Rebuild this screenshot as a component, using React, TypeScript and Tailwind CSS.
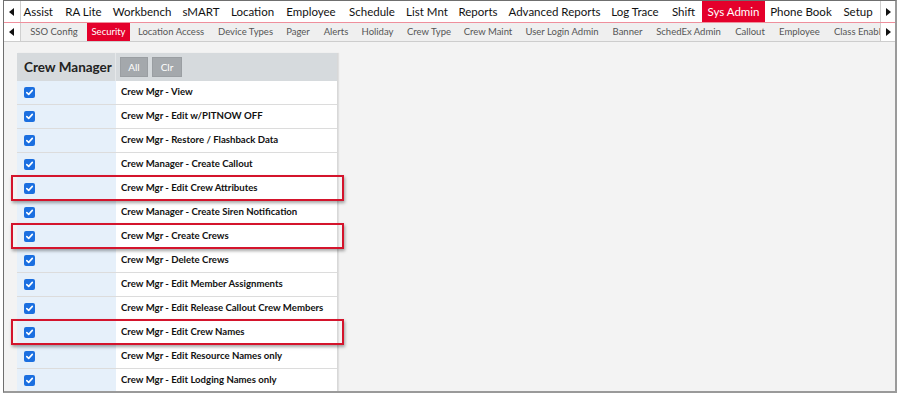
import React from "react";

const top: [string, number][] = [
  ["RA Lite", 47], ["Workbench", 70], ["sMART", 48], ["Location", 55], ["Employee", 62], ["Schedule", 60],
  ["List Mnt", 50], ["Reports", 52], ["Advanced Reports", 101], ["Log Trace", 60], ["Shift", 37], ["Sys Admin", 63],
  ["Phone Book", 72], ["Setup", 42],
];
const sub: [string, number][] = [
  ["SSO Config", 66], ["Security", 43], ["Location Access", 82], ["Device Types", 67], ["Pager", 38], ["Alerts", 38],
  ["Holiday", 45], ["Crew Type", 58], ["Crew Maint", 60], ["User Login Admin", 88], ["Banner", 43], ["SchedEx Admin", 79],
  ["Callout", 44], ["Employee", 55],
];
const rows = [
  "Crew Mgr - View",
  "Crew Mgr - Edit w/PITNOW OFF",
  "Crew Mgr - Restore / Flashback Data",
  "Crew Manager - Create Callout",
  "Crew Mgr - Edit Crew Attributes",
  "Crew Manager - Create Siren Notification",
  "Crew Mgr - Create Crews",
  "Crew Mgr - Delete Crews",
  "Crew Mgr - Edit Member Assignments",
  "Crew Mgr - Edit Release Callout Crew Members",
  "Crew Mgr - Edit Crew Names",
  "Crew Mgr - Edit Resource Names only",
  "Crew Mgr - Edit Lodging Names only",
];
const highlighted = [4, 6, 10];

function Arrow({ dir }: { dir: "l" | "r" }) {
  return (
    <svg width="6" height="8" viewBox="0 0 6 8">
      {dir === "l" ? <path d="M5 0 L0 4 L5 8 Z" fill="#111" /> : <path d="M1 0 L6 4 L1 8 Z" fill="#111" />}
    </svg>
  );
}

function Check() {
  return (
    <div className="w-[11px] h-[11px] rounded-[2px] bg-[#1b6fe0] flex items-center justify-center">
      <svg width="9" height="9" viewBox="0 0 9 9">
        <path d="M1.8 4.6 L3.7 6.4 L7.3 2.4" stroke="#fff" strokeWidth="1.6" fill="none" strokeLinecap="round" strokeLinejoin="round" />
      </svg>
    </div>
  );
}

export default function App() {
  return (
    <div className="w-[900px] h-[396px] bg-white" style={{ fontFamily: "Lato, 'Noto Sans', sans-serif" }}>
      <div className="ml-[3px] w-[894px] h-[393px] border-l border-t border-[#6f6f6f] border-r-2 border-b-2 border-r-[#9a9a9a] border-b-[#9a9a9a] bg-[#f3f3f3] flex flex-col overflow-hidden">
        {/* top bar */}
        <div className="h-[22px] shrink-0 bg-white border-b border-[#ef8f9c] flex">
          <div className="w-[17px] shrink-0 border-r border-[#cfcfcf] flex items-center justify-center"><Arrow dir="l" /></div>
          <div className="flex-1 overflow-hidden flex">
            <div className="w-[39px] shrink-0 overflow-hidden flex justify-end pr-[7px] items-center h-[21px] text-[11.5px] text-[#111] whitespace-nowrap">Employee Assist</div>
            {top.map(([t, w]) => (
              <div key={t} style={{ width: w }} className={`shrink-0 h-[21px] flex items-center justify-center text-[11.5px] whitespace-nowrap ${t === "Sys Admin" ? "bg-[#e4002b] text-white" : "text-[#111]"}`}>{t}</div>
            ))}
          </div>
          <div className="w-[15px] shrink-0 border-l border-[#cfcfcf] flex items-center justify-center"><Arrow dir="r" /></div>
        </div>
        {/* sub bar */}
        <div className="h-[19px] shrink-0 bg-[#efefef] border-b border-[#cdcdcd] flex">
          <div className="w-[17px] shrink-0 bg-white border-r border-[#cfcfcf] flex items-center justify-center"><Arrow dir="l" /></div>
          <div className="flex-1 overflow-hidden flex">
            {sub.map(([t, w]) => (
              <div key={t} style={{ width: w }} className={`shrink-0 h-[18px] flex items-center justify-center text-[9.5px] whitespace-nowrap ${t === "Security" ? "bg-[#e4002b] text-white" : "text-[#555]"}`}>{t}</div>
            ))}
            <div className="flex-1 overflow-hidden h-[18px] flex items-center pl-[7px] text-[9.5px] text-[#555] whitespace-nowrap">Class Enabled</div>
          </div>
          <div className="w-[15px] shrink-0 bg-white border-l border-[#cfcfcf] flex items-center justify-center"><Arrow dir="r" /></div>
        </div>
        {/* content */}
        <div className="pl-[13px] pt-[11px]">
          <div className="relative w-[321px] border-r border-[#d8d8d8] shadow-[1px_0_1px_rgba(0,0,0,0.08)]">
            <div className="h-[28px] bg-[#d6dadd] flex">
              <div className="w-[99px] border-r border-[#e6e8ea] flex items-center pl-[7px] text-[13.5px] font-bold text-[#222]">Crew Manager</div>
              <div className="flex items-center gap-[4px] pl-[4px]">
                <div className="w-[28px] h-[20px] bg-[#a4a8ac] border border-[#9a9ea2] text-white text-[10px] flex items-center justify-center">All</div>
                <div className="w-[30px] h-[20px] bg-[#a4a8ac] border border-[#9a9ea2] text-white text-[10px] flex items-center justify-center">Clr</div>
              </div>
            </div>
            {rows.map((r) => (
              <div key={r} className="h-[24px] flex border-b border-[#dcdcdc]">
                <div className="w-[99px] bg-[#e6f0fa] flex items-center pl-[7px]"><Check /></div>
                <div className="flex-1 bg-white flex items-center pl-[5px] text-[9.6px] font-bold text-[#111] whitespace-nowrap">{r}</div>
              </div>
            ))}
            {highlighted.map((i) => (
              <div key={i} className="absolute left-[-6px] w-[333px] h-[26px] border-2 border-[#d4142c] shadow-[1px_2px_3px_rgba(0,0,0,0.35)]" style={{ top: 28 + i * 24 - 2 }} />
            ))}
          </div>
        </div>
      </div>
    </div>
  );
}
